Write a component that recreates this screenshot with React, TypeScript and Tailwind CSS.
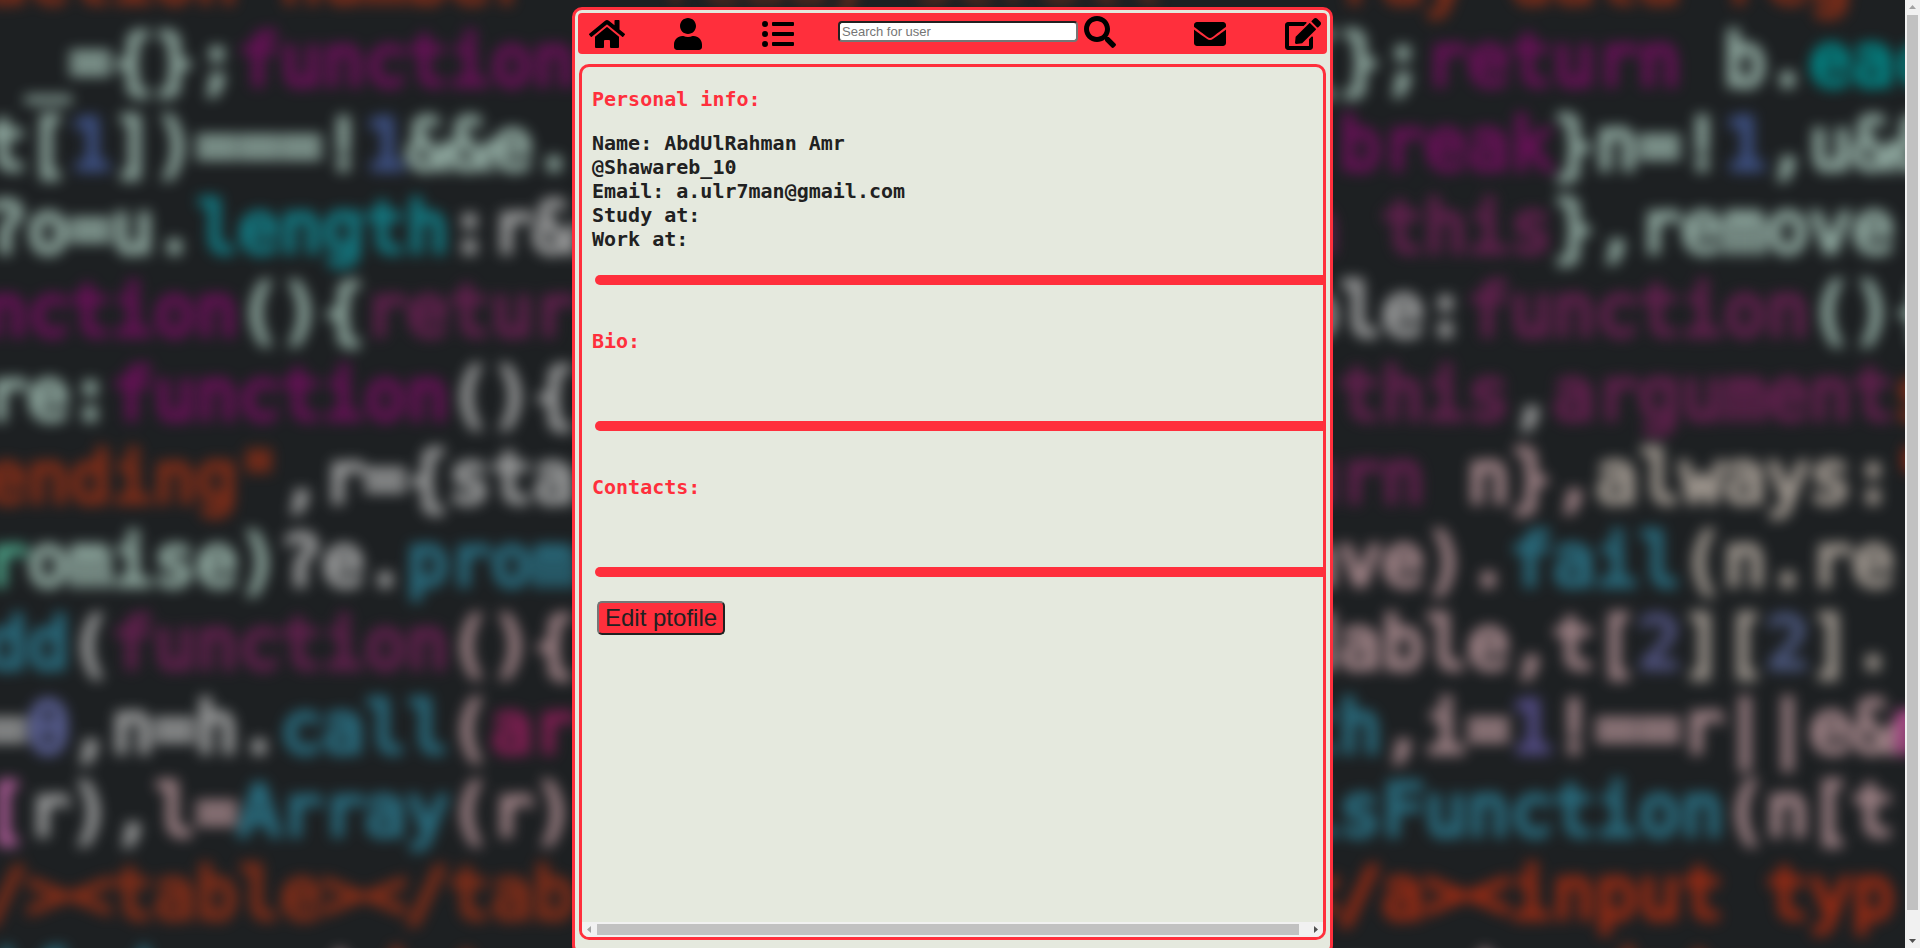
import React from "react";
import { FaHome, FaUser, FaListUl, FaSearch, FaEnvelope, FaEdit } from "react-icons/fa";

type Run = [text: string, color: string];

const MINT = "#97b2a8";
const ASH = "#a3a4a4";
const ROSE = "#a8898d";
const SAND = "#a89f96";
const PLUM = "#6a1059";
const WINE = "#64204f";
const TEAL = "#127f88";
const SEA = "#2a7184";
const NAVY = "#40548a";
const RUST = "#872e18";
const EMBER = "#9a2b14";

const LEFT_ROWS: Run[][] = [
  [["action number", RUST]],
  [[" _={};", MINT], ["function", PLUM]],
  [["t[", MINT], ["1", NAVY], ["])===!", MINT], ["1", NAVY], ["&&e.", MINT]],
  [["?o=u.", MINT], ["length", TEAL], [":r&", ASH]],
  [["nction", PLUM], ["(){", MINT], ["retur", WINE]],
  [["re:", MINT], ["function", PLUM], ["(){", ASH]],
  [["ending\"", RUST], [",r={sta", ASH]],
  [["r", "#4fa88c"], ["omise)", MINT], ["?e.", ASH], ["prom", SEA]],
  [["dd", SEA], ["(", ASH], ["function", WINE], ["(){", ROSE]],
  [["=", ASH], ["0", "#5e649c"], [",n=h.", ASH], ["call", SEA], ["(", ROSE], ["ar", "#881e56"]],
  [["[", "#b860a0"], ["r),", ASH], ["l=", ROSE], ["Array", SEA], ["(r)", ROSE]],
  [["/><table></tab", RUST]],
  [["if d    ", SEA], ["t", ROSE], ["data", RUST]],
];

const RIGHT_ROWS: Run[][] = [
  [[" ray data reg", RUST]],
  [["{};", MINT], ["return", PLUM], [" b.", MINT], ["eac", "#008a8a"]],
  [[" break", PLUM], ["}n=!", MINT], ["1", NAVY], [",u&&", MINT]],
  [["n this", WINE], ["},remove", MINT]],
  [["ble:", ASH], ["function", WINE], ["(){", MINT]],
  [[" this", WINE], [",", ASH], ["argument", WINE], ["s", RUST]],
  [["urn", WINE], [" n},", ROSE], ["always:", SAND], ["\"", EMBER]],
  [["ave).", ROSE], ["fail", SEA], ["(n.re", SAND]],
  [["dable,t[", ROSE], ["2", "#50527e"], ["][", SAND], ["2", "#4c587e"], ["].", SAND]],
  [["th", SEA], [",i=", ROSE], ["1", "#564e8a"], ["!==r||e&", ROSE], ["m", "#c05098"]],
  [["isFunction", SEA], ["(n[t", ROSE]],
  [["</a><input typ", EMBER]],
  [[" n  t", ROSE], ["  data", RUST]],
];

function CodeColumn({ rows, x, size }: { rows: Run[][]; x: number; size: number }) {
  return (
    <g fontSize={size}>
      {rows.map((runs, row) => (
        <text key={row} x={x} y={2 + Math.round(row * 83.3)} xmlSpace="preserve">
          {runs.map(([text, color], i) => (
            <tspan key={i} fill={color} stroke={color}>
              {text}
            </tspan>
          ))}
        </text>
      ))}
    </g>
  );
}

function Wallpaper() {
  return (
    <svg
      aria-hidden="true"
      className="absolute inset-0 h-full w-full"
      viewBox="0 0 1905 948"
      preserveAspectRatio="xMidYMid slice"
    >
      <defs>
        <filter
          id="soft"
          x="-5%"
          y="-5%"
          width="110%"
          height="110%"
          colorInterpolationFilters="sRGB"
        >
          <feGaussianBlur stdDeviation="7" />
        </filter>
      </defs>
      <g
        filter="url(#soft)"
        opacity={0.95}
        fontFamily="'DejaVu Sans Mono', monospace"
        strokeWidth={5}
      >
        <CodeColumn rows={LEFT_ROWS} x={-15} size={70} />
        <text x={660} y={2} fontSize={70} fill={RUST}>
          ready scroll
        </text>
        <CodeColumn rows={RIGHT_ROWS} x={1296} size={71} />
      </g>
    </svg>
  );
}

function Arrow({ points, color }: { points: string; color: string }) {
  return (
    <svg aria-hidden="true" viewBox="0 0 15 15" className="h-[15px] w-[15px] shrink-0">
      <polygon points={points} fill={color} />
    </svg>
  );
}

function VerticalScrollbar() {
  return (
    <div className="flex w-[15px] shrink-0 flex-col items-center bg-[#f1f1f1]">
      <Arrow points="4,9 11,9 7.5,5" color="#a3a3a3" />
      <div className="w-[11px] grow bg-[#c1c1c1]" />
      <div className="h-[23px]" />
      <Arrow points="4,6 11,6 7.5,10" color="#505050" />
    </div>
  );
}

function HorizontalScrollbar() {
  return (
    <div className="flex h-[15px] shrink-0 items-center bg-[#f1f1f1]">
      <Arrow points="9,4 9,11 5,7.5" color="#a3a3a3" />
      <div className="h-[11px] grow bg-[#c1c1c1]" />
      <div className="w-[9px]" />
      <Arrow points="6,4 6,11 10,7.5" color="#505050" />
    </div>
  );
}

function NavBar() {
  return (
    <nav className="grid h-[41px] grid-cols-[85fr_88fr_76fr_356fr_91fr_36px] items-center rounded-[4px] bg-[#ff2f3c] pr-[6px] pl-[11px] text-[32px] text-black">
      <a href="#home" aria-label="Home" className="justify-self-start">
        <FaHome className="h-[32px] w-[36px]" />
      </a>
      <a href="#profile" aria-label="Profile" className="justify-self-start">
        <FaUser className="h-[32px] w-[28px]" />
      </a>
      <a href="#list" aria-label="List" className="justify-self-start">
        <FaListUl />
      </a>
      <form className="flex items-center gap-[6px] pb-[4px]" onSubmit={(e) => e.preventDefault()}>
        <input
          type="text"
          aria-label="Search for user"
          placeholder="Search for user"
          className="h-[21px] w-[240px] rounded-[4px] border-2 border-t-[#212121] border-r-[#767676] border-b-[#767676] border-l-[#212121] bg-white px-[2px] font-['Liberation_Sans',Arial,sans-serif] text-[13px] text-black placeholder:text-[#757575]"
        />
        <button type="submit" aria-label="Search">
          <FaSearch />
        </button>
      </form>
      <a href="#messages" aria-label="Messages" className="justify-self-start">
        <FaEnvelope />
      </a>
      <a href="#post" aria-label="New post" className="justify-self-start">
        <FaEdit className="h-[32px] w-[36px]" />
      </a>
    </nav>
  );
}

function Divider() {
  return <hr className="ml-[13px] h-[10px] rounded-l-[5px] border-0 bg-[#ff2f3c]" />;
}

function Heading({ children }: { children: React.ReactNode }) {
  return <h2 className="px-[10px] text-[#ff2f3c]">{children}</h2>;
}

export default function App() {
  return (
    <div className="flex h-screen overflow-hidden bg-[#1d2022]">
      <main className="relative grow overflow-hidden">
        <Wallpaper />
        <div className="relative mx-auto mt-[7px] h-screen w-[calc(40%-1px)] rounded-[10px] border-3 border-[#ff2f3c] bg-[#e5e9de] p-[3px]">
          <NavBar />
          <section className="mx-px mt-[10px] flex h-[calc(100vh-72px)] flex-col overflow-hidden rounded-[10px] border-3 border-[#ff2f3c] font-['DejaVu_Sans_Mono',monospace] text-[20px] leading-[24px] font-bold text-[#212121]">
            <div className="grow pt-[20px]">
              <Heading>Personal info:</Heading>
              <div className="px-[10px] pt-[20px] pb-[24px]">
                <p>Name: AbdUlRahman Amr</p>
                <p>@Shawareb_10</p>
                <p>Email: a.ulr7man@gmail.com</p>
                <p>Study at:</p>
                <p>Work at:</p>
              </div>
              <Divider />
              <div className="h-[136px] pt-[44px]">
                <Heading>Bio:</Heading>
              </div>
              <Divider />
              <div className="h-[136px] pt-[44px]">
                <Heading>Contacts:</Heading>
              </div>
              <Divider />
              <button
                type="button"
                className="mt-[24px] ml-[15px] h-[34px] rounded-[5px] border-2 border-t-[#767676] border-r-[#212121] border-b-[#212121] border-l-[#767676] bg-[#ff2f3c] px-[6px] font-['Liberation_Sans',Arial,sans-serif] text-[24px] leading-[28px] font-normal"
              >
                Edit ptofile
              </button>
            </div>
            <HorizontalScrollbar />
          </section>
        </div>
      </main>
      <VerticalScrollbar />
    </div>
  );
}
